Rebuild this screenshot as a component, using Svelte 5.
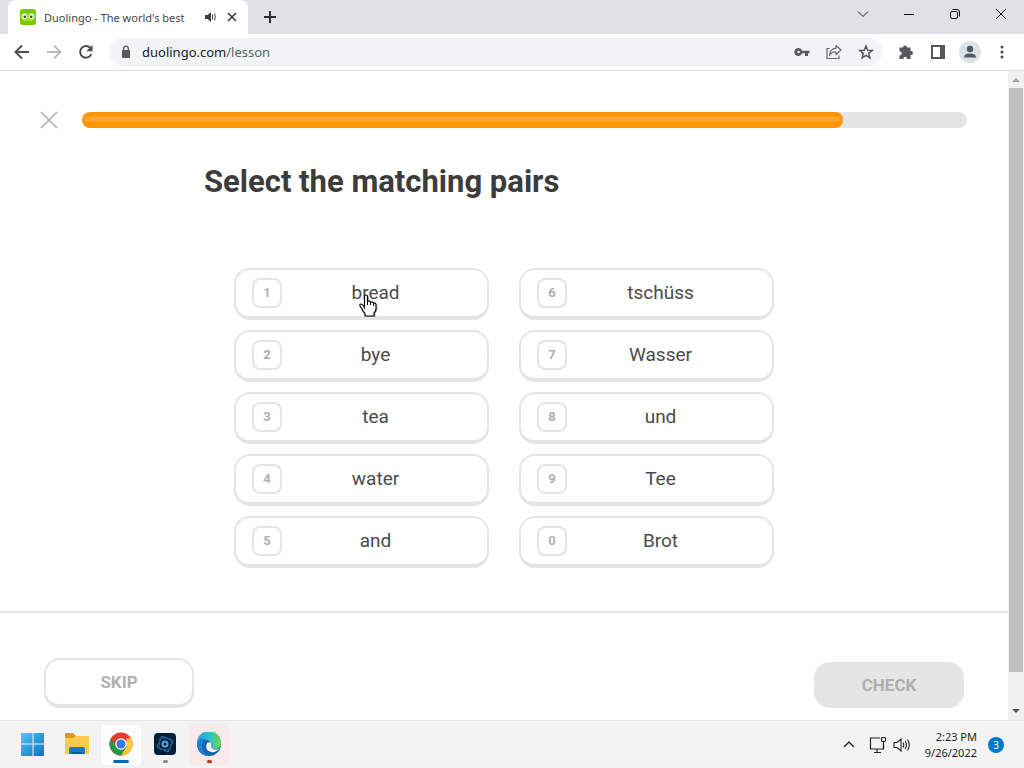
<script lang="ts">
	type Card = { key: string; word: string };

	const left: Card[] = [
		{ key: '1', word: 'bread' },
		{ key: '2', word: 'bye' },
		{ key: '3', word: 'tea' },
		{ key: '4', word: 'water' },
		{ key: '5', word: 'and' }
	];

	const right: Card[] = [
		{ key: '6', word: 'tschüss' },
		{ key: '7', word: 'Wasser' },
		{ key: '8', word: 'und' },
		{ key: '9', word: 'Tee' },
		{ key: '0', word: 'Brot' }
	];

	const hovered = '1';
	let progress = $state(86);
	let address = $state('duolingo.com');
</script>

<div class="screen">
	<div class="tabstrip">
		<div class="tab">
			<svg class="favicon" width="16" height="16" viewBox="0 0 16 16">
				<rect width="16" height="16" rx="3" fill="#78c800" />
				<path d="M1 5q3.500-2.500 7 0q3.500-2.500 7 0v4q-1 3-4 3t-3-2q0 2-3 2t-4-3z" fill="#9be22d" />
				<ellipse cx="4.500" cy="7.500" rx="2.200" ry="2.800" fill="#fff" />
				<ellipse cx="11.500" cy="7.500" rx="2.200" ry="2.800" fill="#fff" />
				<circle cx="4.800" cy="7.800" r="1.300" fill="#3c4a28" />
				<circle cx="11.200" cy="7.800" r="1.300" fill="#3c4a28" />
				<path d="M6.500 10h3L8 12z" fill="#ffc200" />
			</svg>
			<span class="tab-title">Duolingo - The world's best</span>
			<button class="plain" aria-label="Mute tab">
				<svg width="11" height="10" viewBox="0 0 11 10" fill="#3c4043">
					<path d="M0 3h2.500L6 0v10L2.500 7H0z" />
					<path d="M7.500 2.500v5M9.500 1.500q1.600 3.500 0 7" fill="none" stroke="#3c4043" />
				</svg>
			</button>
			<button class="plain" aria-label="Close tab">
				<svg width="10" height="10" viewBox="0 0 10 10" stroke="#3c4043" stroke-width="1.700">
					<path d="M1 1l8 8M9 1l-8 8" />
				</svg>
			</button>
		</div>
		<button class="plain new-tab" aria-label="New tab">
			<svg width="12" height="12" viewBox="0 0 12 12" stroke="#2b2e31" stroke-width="2">
				<path d="M6 0v12M0 6h12" />
			</svg>
		</button>
		<div class="window-buttons">
			<button class="plain" aria-label="Search tabs">
				<svg width="12" height="12" viewBox="0 0 12 12" fill="none" stroke="#202124">
					<path d="M1 3.500l5 5 5-5" />
				</svg>
			</button>
			<button class="plain" aria-label="Minimize">
				<svg width="12" height="12" viewBox="0 0 12 12" stroke="#111">
					<path d="M1 6.500h10" />
				</svg>
			</button>
			<button class="plain" aria-label="Restore">
				<svg width="12" height="12" viewBox="0 0 12 12" fill="none" stroke="#111">
					<rect x="1.500" y="3.500" width="7" height="7" rx="1.500" />
					<path d="M3.500 1.500H8q2.500 0 2.500 2.500v4.500" />
				</svg>
			</button>
			<button class="plain" aria-label="Close">
				<svg width="12" height="12" viewBox="0 0 12 12" stroke="#111">
					<path d="M1 1l10 10M11 1L1 11" />
				</svg>
			</button>
		</div>
	</div>

	<div class="toolbar">
		<button class="plain" aria-label="Back">
			<svg width="16" height="16" viewBox="0 0 16 16" fill="none" stroke="#4a4d51" stroke-width="1.900">
				<path d="M15 8H2M8 1.500L1.500 8 8 14.500" />
			</svg>
		</button>
		<button class="plain" aria-label="Forward">
			<svg width="16" height="16" viewBox="0 0 16 16" fill="none" stroke="#b8babd" stroke-width="1.900">
				<path d="M1 8h13M8 1.500L14.500 8 8 14.500" />
			</svg>
		</button>
		<button class="plain" aria-label="Reload">
			<svg width="16" height="16" viewBox="0 0 16 16">
				<path d="M13.300 10.200A5.800 5.800 0 1 1 12.300 4" fill="none" stroke="#4a4d51" stroke-width="2" />
				<path d="M14.500 1v6.200H8.300z" fill="#4a4d51" />
			</svg>
		</button>
		<div class="omnibox">
			<svg width="8" height="14" viewBox="0 0 8 14">
				<path d="M1.700 6V3.500a2.300 2.300 0 0 1 4.600 0V6" fill="none" stroke="#55585c" stroke-width="1.300" />
				<rect y="5" width="8" height="8" rx="1" fill="#55585c" />
			</svg>
			<a class="url" href="#lesson">{address}<span>/lesson</span></a>
			<button class="plain" aria-label="Passwords">
				<svg width="16" height="16" viewBox="0 0 16 16" fill="#55585c">
					<path fill-rule="evenodd" d="M4.500 4a4 4 0 1 0 3.700 5.300H11V12h3V9.300h1.500V6.700H8.200A4 4 0 0 0 4.500 4zm0 2.700a1.300 1.300 0 1 1 0 2.600 1.300 1.300 0 0 1 0-2.600z" />
				</svg>
			</button>
			<button class="plain" aria-label="Share">
				<svg width="16" height="16" viewBox="0 0 16 16" fill="none" stroke="#66696d" stroke-width="1.200">
					<path d="M3.500 4.500H1v10h12v-3" />
					<path d="M10 1.500L15 6l-5 4.500V8q-4-.500-6.500 3.500Q4 5 10 4.200z" stroke-linejoin="round" />
				</svg>
			</button>
			<button class="plain" aria-label="Bookmark">
				<svg width="16" height="16" viewBox="0 0 16 16" fill="none" stroke="#55585c" stroke-width="1.500">
					<path d="M8 2l1.700 4.200 4.500.300-3.500 2.900 1.100 4.400L8 11.400l-3.800 2.400 1.100-4.400-3.500-2.900 4.500-.300z" />
				</svg>
			</button>
		</div>
		<button class="plain" aria-label="Extensions">
			<svg width="16" height="16" viewBox="0 0 16 16" fill="#55585c">
				<path d="M5 3.500a2 2 0 1 1 4 0h3.500V7h.500a2 2 0 1 1 0 4h-.500v4H9v-.500a1.800 1.800 0 0 0-3.600 0v.500H1.500v-3.800H2a1.800 1.800 0 0 0 0-3.600h-.500V3.500z" />
			</svg>
		</button>
		<button class="plain" aria-label="Side panel">
			<svg width="16" height="16" viewBox="0 0 16 16">
				<rect x="2" y="2" width="12" height="12" fill="#fff" stroke="#55585c" stroke-width="2" />
				<path d="M10 2h4v12h-4z" fill="#55585c" />
			</svg>
		</button>
		<button class="plain" aria-label="Profile">
			<svg width="22" height="22" viewBox="0 0 22 22">
				<circle cx="11" cy="11" r="11" fill="#dee1e6" />
				<circle cx="11" cy="8" r="3.200" fill="#4d5b66" />
				<path d="M5 16.500q0-4 6-4t6 4z" fill="#4d5b66" />
			</svg>
		</button>
		<button class="plain" aria-label="Menu">
			<svg width="16" height="16" viewBox="0 0 16 16" fill="#4a4d51">
				<circle cx="8" cy="3" r="1.500" />
				<circle cx="8" cy="8" r="1.500" />
				<circle cx="8" cy="13" r="1.500" />
			</svg>
		</button>
	</div>

	<div class="viewport">
		<main class="lesson">
			<header>
				<button class="plain" aria-label="Quit lesson">
					<svg width="18" height="18" viewBox="0 0 18 18" stroke="#afafaf" stroke-width="1.600">
						<path d="M1 1l16 16M17 1L1 17" />
					</svg>
				</button>
				<div class="progress" role="progressbar" aria-label="Lesson progress" aria-valuenow={progress}>
					<div class="fill" style="width: {progress}%"></div>
				</div>
			</header>

			<section class="challenge">
				<h1>Select the matching pairs</h1>
				<div class="pairs">
					{#each [left, right] as column}
						<div class="column">
							{#each column as card (card.key)}
								<button class="card">
									<span class="key">{card.key}</span>
									<span class="word">{card.word}</span>
									{#if card.key === hovered}
										<svg class="pointer" width="20" height="24" viewBox="0 0 20 24">
											<path
												d="M7 3q2-2 3 0v5q2-1 3 .500 2-.500 3 1 2.500-.500 2.500 2V16l-2 4v3H8v-2l-4-6q-2-3-1-4 2-1 4 2z"
												fill="#888"
												opacity=".6"
											/>
											<path
												d="M5.500 12V2.500q0-1.500 1.500-1.500t1.500 1.500V7q2.500-.700 3 1 2.300-.700 3 1 2.500-.500 2.500 2v4q0 2-2 4v3h-9v-2.500q-1.500-1-3-4.500L1 12q-.500-2 1-2 1.500 0 3.500 3.500z"
												fill="#fff"
												stroke="#000"
												stroke-width="1.200"
											/>
											<path d="M8.500 7v4M11.500 8v3M14.500 9v3" stroke="#000" />
										</svg>
									{/if}
								</button>
							{/each}
						</div>
					{/each}
				</div>
			</section>

			<footer>
				<button class="skip">SKIP</button>
				<button class="check" disabled>CHECK</button>
			</footer>
		</main>

		<div class="scrollbar">
			<svg width="8" height="17" viewBox="0 0 8 17" fill="#a3a3a3"><path d="M0 11l4-4 4 4z" /></svg>
			<div class="track"><div class="thumb"></div></div>
			<svg width="8" height="17" viewBox="0 0 8 17" fill="#505050"><path d="M0 6h8l-4 4z" /></svg>
		</div>
	</div>

	<div class="taskbar">
		<button class="app" aria-label="Start">
			<svg width="24" height="24" viewBox="0 0 24 24">
				<defs>
					<linearGradient id="win" x1="0" y1="0" x2="1" y2="1">
						<stop offset="0" stop-color="#55c6f2" />
						<stop offset="1" stop-color="#0873c4" />
					</linearGradient>
				</defs>
				<path d="M0 1h11.500v10.500H0zM12.500 1H23v10.500H12.500zM0 12.500h11.500V24H0zM12.500 12.500H23V24H12.500z" fill="url(#win)" />
			</svg>
		</button>
		<button class="app" aria-label="File Explorer">
			<svg width="24" height="24" viewBox="0 0 24 24">
				<path d="M0 2q0-1 1-1h7l3 3h12q1 0 1 1v8H0z" fill="#d99a1c" />
				<path d="M0 6h8l3-2h12q1 0 1 1v17H0z" fill="#fbcb4e" />
				<path d="M4 22v-5q0-2 2-2h12q2 0 2 2v5z" fill="#1b78c8" />
				<path d="M7 22v-2h10v2z" fill="#0d599d" />
			</svg>
		</button>
		<button class="app chrome" aria-label="Chrome">
			<svg width="24" height="24" viewBox="0 0 24 24">
				<circle cx="12" cy="12" r="11.500" fill="#e33b2e" />
				<path d="M22 6.300A11.500 11.500 0 0 1 12 23.500l5.500-9V6.300z" fill="#fcc934" />
				<path d="M2 6.300A11.500 11.500 0 0 0 12 23.500l5-8.500-10 0z" fill="#279847" />
				<circle cx="12" cy="12" r="5.800" fill="#fff" />
				<circle cx="12" cy="12" r="4.500" fill="#3478e5" />
			</svg>
		</button>
		<button class="app editor" aria-label="Photoshop Elements">
			<svg width="24" height="24" viewBox="0 0 24 24">
				<rect x="1" y="1" width="22" height="22" rx="4" fill="#001e36" />
				<g fill="none" stroke="#2b7fc6">
					<path d="M9 4l11 5-5 11-11-5z" />
					<path d="M7 6l12 1-2 11-11-1z" stroke="#1c5688" />
					<circle cx="12" cy="12" r="2.600" stroke="#4fa6ee" stroke-width="2" />
				</g>
			</svg>
		</button>
		<button class="app edge" aria-label="Edge">
			<svg width="24" height="24" viewBox="0 0 24 24">
				<defs>
					<linearGradient id="wave" x1="0" y1="0" x2="1" y2="0">
						<stop offset="0" stop-color="#269be0" />
						<stop offset=".5" stop-color="#30bfc9" />
						<stop offset="1" stop-color="#67d74c" />
					</linearGradient>
				</defs>
				<circle cx="12" cy="12" r="12" fill="#1266ae" />
				<path d="M0 11A12 12 0 0 1 24 11q0 6-6 6-4 0-4-3 1-5-4-6Q3 6.500 0 13z" fill="url(#wave)" />
				<path d="M10 11q-3 7 4 9 5 1 9-4-2 2-5 1.500-4-.500-4-3.500 1-2-1-4z" fill="#f7f0f1" />
				<path d="M0 12q2-6 8-5-3 3-3 7 0 7 7 10Q1 24 0 12z" fill="#1a82cf" />
			</svg>
		</button>

		<div class="tray">
			<button class="plain" aria-label="Show hidden icons">
				<svg width="12" height="16" viewBox="0 0 12 16" fill="none" stroke="#222" stroke-width="1.400">
					<path d="M1 10l5-5 5 5" />
				</svg>
			</button>
			<button class="plain network" aria-label="Network">
				<svg width="18" height="18" viewBox="0 0 18 18" fill="none" stroke="#222" stroke-width="1.200">
					<path d="M11 2H1.500v11h13v-4M5 16.500h7M8 13v3" />
					<rect x="12.500" y="1.500" width="4" height="4" rx="1" />
					<path d="M14.500 5.500v7.500" />
				</svg>
			</button>
			<button class="plain" aria-label="Volume">
				<svg width="18" height="16" viewBox="0 0 18 16" fill="none" stroke="#222" stroke-width="1.100">
					<path d="M1 5.500h3L8 2v12l-4-3.500H1z" />
					<path d="M10 5.500q1.500 2.500 0 5M12.200 4q2.500 4 0 8M14.500 2.500q3.500 5.500 0 11" />
				</svg>
			</button>
			<div class="clock">
				<div>2:23 PM</div>
				<div>9/26/2022</div>
			</div>
			<span class="count">3</span>
		</div>
	</div>
</div>

<style>
	:global(body) {
		margin: 0;
	}

	.screen {
		display: flex;
		flex-direction: column;
		min-height: 100vh;
		background: #fff;
		font-family: 'Noto Sans', 'Open Sans', sans-serif;
	}

	button {
		box-sizing: border-box;
		font-family: inherit;
		cursor: pointer;
	}

	svg {
		display: block;
		flex-shrink: 0;
	}

	.plain {
		display: flex;
		padding: 0;
		background: none;
		border: none;
	}

	.tabstrip {
		display: flex;
		align-items: center;
		height: 34px;
		padding-left: 8px;
		background: #dee1e6;
	}

	.tab {
		display: flex;
		align-items: center;
		box-sizing: border-box;
		width: 240px;
		height: 34px;
		padding: 0 11px 0 12px;
		background: #fff;
		border-radius: 8px 8px 0 0;
	}

	.tab-title {
		flex: 1;
		margin-left: 8px;
		overflow: hidden;
		white-space: nowrap;
		font-size: 11px;
		color: #45484c;
	}

	.tab .plain {
		margin-left: 11px;
	}

	.new-tab {
		margin-left: 16px;
	}

	.window-buttons {
		display: flex;
		gap: 34px;
		margin-left: auto;
		padding: 0 17px 6px 0;
	}

	.toolbar {
		display: flex;
		align-items: center;
		gap: 16px;
		height: 36px;
		padding: 0 14px;
		border-bottom: 1px solid #dadce0;
	}

	.toolbar .plain {
		flex-shrink: 0;
		justify-content: center;
		width: 16px;
	}

	.omnibox {
		display: flex;
		align-items: center;
		flex: 1;
		gap: 16px;
		height: 28px;
		padding: 0 8px 0 12px;
		background: #f1f3f4;
		border-radius: 14px;
	}

	.url {
		flex: 1;
		margin-left: -4px;
		font-size: 13px;
		color: #202124;
		text-decoration: none;
	}

	.url span {
		color: #5f6368;
	}

	.viewport {
		display: flex;
		flex: 1;
	}

	.lesson {
		display: flex;
		flex-direction: column;
		flex: 1;
		font-family: Roboto, 'Liberation Sans', sans-serif;
	}

	header {
		display: flex;
		align-items: center;
		gap: 24px;
		padding: 40px 41px 0 40px;
	}

	.progress {
		flex: 1;
		height: 16px;
		background: #e5e5e5;
		border-radius: 8px;
		overflow: hidden;
	}

	.fill {
		height: 16px;
		border-radius: 8px;
		background: linear-gradient(#f9960c 4px, #ffa62e 5px, #ffa62e 9px, #ff9600 10px);
		box-shadow: inset 5px 0 3px -2px #ff9600, inset -5px 0 3px -2px #ff9600;
	}

	.challenge {
		width: 100%;
		max-width: 600px;
		margin: 0 auto;
		padding-top: 32px;
	}

	h1 {
		margin: 0;
		font-size: 31px;
		line-height: 42px;
		font-weight: 700;
		color: #3c3c3c;
	}

	.pairs {
		display: grid;
		grid-template-columns: 1fr 1fr;
		gap: 30px;
		padding: 65px 30px 0;
	}

	.column {
		display: flex;
		flex-direction: column;
		gap: 10px;
	}

	.card {
		position: relative;
		display: flex;
		align-items: center;
		padding: 8px 18px 8px 16px;
		background: #fff;
		border: 2px solid #e5e5e5;
		border-bottom-width: 4px;
		border-radius: 16px;
		font-size: 19px;
		color: #4b4b4b;
	}

	.key {
		box-sizing: border-box;
		width: 30px;
		border: 2px solid #e5e5e5;
		border-radius: 8px;
		font-size: 13px;
		line-height: 26px;
		font-weight: 700;
		color: #afafaf;
	}

	.word {
		flex: 1;
		line-height: 30px;
	}

	.pointer {
		position: absolute;
		top: 24px;
		left: 49%;
	}

	footer {
		display: flex;
		justify-content: space-between;
		align-items: flex-end;
		margin-top: auto;
		padding: 45px 44px 12px;
		border-top: 2px solid #e5e5e5;
	}

	footer button {
		width: 150px;
		border-radius: 16px;
		font-size: 17px;
		font-weight: 700;
		color: #afafaf;
	}

	.skip {
		height: 50px;
		background: #fff;
		border: 2px solid #e5e5e5;
		border-bottom-width: 4px;
	}

	.check {
		height: 46px;
		background: #e5e5e5;
		border: none;
	}

	.scrollbar {
		display: flex;
		flex-direction: column;
		align-items: center;
		width: 16px;
		background: #f1f1f1;
	}

	.track {
		flex: 1;
		width: 14px;
	}

	.thumb {
		height: 95%;
		background: #c1c1c1;
	}

	.taskbar {
		display: flex;
		align-items: center;
		box-sizing: border-box;
		height: 48px;
		padding: 0 20px 0 13px;
		background: #f3f3f3;
		border-top: 1px solid #e6e6e6;
	}

	.app {
		display: flex;
		flex-direction: column;
		align-items: center;
		width: 40px;
		height: 40px;
		margin-right: 4px;
		padding: 7px 0 0;
		background: none;
		border: none;
		border-radius: 4px;
	}

	.app::after {
		content: '';
		width: 5px;
		height: 3px;
		margin-top: 4px;
		border-radius: 2px;
	}

	.chrome {
		background: #fdfdfd;
	}

	.chrome::after {
		width: 16px;
		background: #0067c0;
	}

	.editor::after {
		background: #8a8a8a;
	}

	.edge {
		background: #fbe8e8;
	}

	.edge::after {
		background: #c42b1c;
	}

	.tray {
		display: flex;
		align-items: center;
		margin-left: auto;
	}

	.network {
		margin: 0 6px 0 14px;
	}

	.clock {
		margin: 0 11px 0 14px;
		font-size: 11px;
		line-height: 16px;
		text-align: right;
		color: #1f1f1f;
	}

	.count {
		width: 16px;
		border-radius: 50%;
		background: #0078c8;
		font-size: 10px;
		line-height: 16px;
		text-align: center;
		color: #fff;
	}
</style>
